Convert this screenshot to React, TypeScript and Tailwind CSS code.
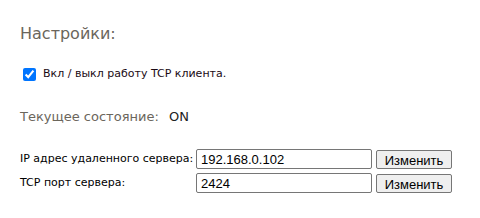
import React from "react";

export default function App() {
  const verdana = { fontFamily: '"DejaVu Sans", Verdana, sans-serif' };
  const arial = { fontFamily: '"Liberation Sans", Arial, sans-serif' };
  return (
    <div className="w-[480px] h-[218px] bg-white pl-[20px] pt-[24px]" style={verdana}>
      <div className="text-[16px] leading-[20px] text-[#6b665c]">Настройки:</div>
      <label className="mt-[23px] ml-[3px] flex items-center gap-[7px] h-[14px]">
        <input type="checkbox" defaultChecked className="m-0 w-[13px] h-[13px] accent-[#0075ff]" />
        <span className="text-[11px] text-[#1a0a14]">Вкл / выкл работу TCP клиента.</span>
      </label>
      <div className="mt-[28px] flex items-center h-[16px] text-[13px]">
        <span className="text-[#6b665c] w-[149px]">Текущее состояние:</span>
        <span className="text-[#222]">ON</span>
      </div>
      <div className="mt-[24px] flex flex-col gap-[4px]">
        <div className="flex items-center h-[20px]">
          <span className="w-[176px] text-[11px] text-black">IP адрес удаленного сервера:</span>
          <input
            defaultValue="192.168.0.102"
            className="w-[176px] h-[20px] border border-[#767676] rounded-[2px] px-[4px] text-[13px] text-black outline-none"
            style={arial}
          />
          <button
            className="ml-[4px] w-[76px] h-[19px] border border-[#767676] rounded-[2px] bg-[#efefef] text-[13px] text-black"
            style={arial}
          >
            Изменить
          </button>
        </div>
        <div className="flex items-center h-[20px]">
          <span className="w-[176px] text-[11px] text-black">TCP порт сервера:</span>
          <input
            defaultValue="2424"
            className="w-[176px] h-[20px] border border-[#767676] rounded-[2px] px-[4px] text-[13px] text-black outline-none"
            style={arial}
          />
          <button
            className="ml-[4px] w-[76px] h-[19px] border border-[#767676] rounded-[2px] bg-[#efefef] text-[13px] text-black"
            style={arial}
          >
            Изменить
          </button>
        </div>
      </div>
    </div>
  );
}
